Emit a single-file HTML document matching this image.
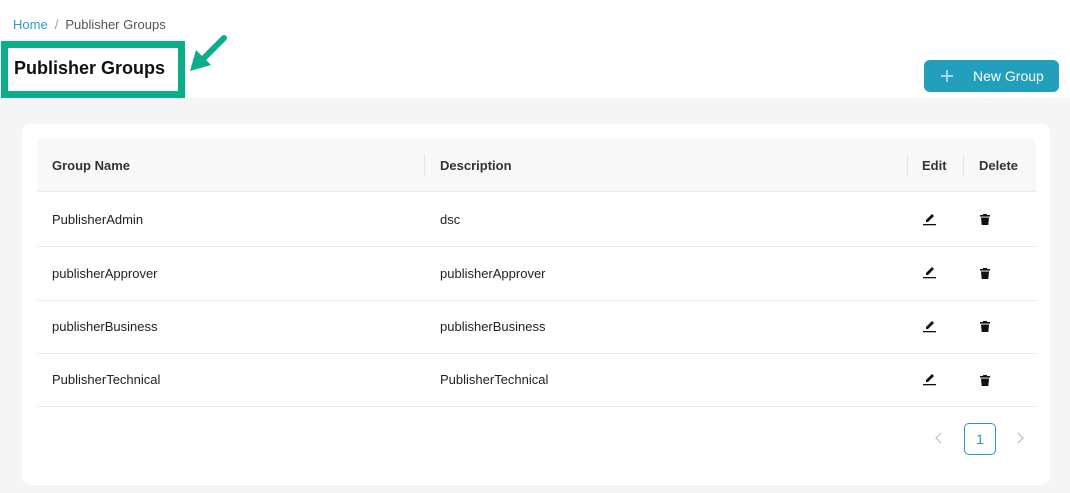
<!DOCTYPE html>
<html><head><style>
*{box-sizing:border-box;margin:0;padding:0}
body{width:1070px;height:493px;background:#f5f5f5;font-family:"Liberation Sans",sans-serif;position:relative;overflow:hidden;color:#222}
.top{position:absolute;left:0;top:0;width:1070px;height:98px;background:#fff}
.bc{position:absolute;left:13px;top:17px;font-size:13px;color:#555}
.bc a{color:#2a9fc0}
.bc span{color:#999;margin:0 7px}
.hl{position:absolute;left:1px;top:41px;width:184px;height:57px;border:7px solid #0aae8b;background:#fff}
.hl div{position:absolute;left:6px;top:10px;font-size:18px;font-weight:bold;color:#111}
.btn{position:absolute;left:924px;top:60px;width:135px;height:32px;background:#229fbd;border-radius:6px;color:#fff;font-size:14px}
.btn .t{position:absolute;left:49px;top:8px}
.card{position:absolute;left:22px;top:124px;width:1028px;height:361px;background:#fff;border-radius:8px}
.th{position:absolute;left:15px;top:14px;width:999px;height:54px;background:#f8f8f8;border-radius:8px 8px 0 0;border-bottom:1px solid #ececec}
.c{position:absolute;font-size:13px;color:#222}
.h{font-weight:bold;top:20px;color:#333}
.dv{position:absolute;top:16px;width:1px;height:22px;background:#e5e5e5}
.row{position:absolute;left:15px;width:999px;height:54px;border-bottom:1px solid #ececec}
.row .c{top:19px}
.pg{position:absolute;left:942px;top:299px;width:32px;height:32px;border:1px solid #229fbd;border-radius:5px;color:#229fbd;font-size:14px;text-align:center;line-height:30px}
</style></head><body>
<div class="top"></div>
<div class="bc"><a>Home</a><span>/</span>Publisher Groups</div>
<div class="hl"><div>Publisher Groups</div></div>
<svg style="position:absolute;left:188px;top:33px" width="42" height="42" viewBox="0 0 42 42"><path d="M36 5 L12 29" stroke="#0aae8b" stroke-width="6" stroke-linecap="round"/><path d="M2 38 L8 17 L23 32 Z" fill="#0aae8b"/></svg>
<div class="btn"><svg style="position:absolute;left:17px;top:10px" width="12" height="12"><path d="M6 0V12M0 6H12" stroke="#cfe9f1" stroke-width="1.4"/></svg><span class="t">New Group</span></div>
<div class="card">
<div class="th">
<span class="c h" style="left:15px">Group Name</span>
<span class="dv" style="left:387px"></span>
<span class="c h" style="left:403px">Description</span>
<span class="dv" style="left:870px"></span>
<span class="c h" style="left:885px">Edit</span>
<span class="dv" style="left:926px"></span>
<span class="c h" style="left:942px">Delete</span>
</div>
<div class="row" style="top:69px"><span class="c" style="left:15px">PublisherAdmin</span><span class="c" style="left:403px">dsc</span></div>
<div class="row" style="top:123px"><span class="c" style="left:15px">publisherApprover</span><span class="c" style="left:403px">publisherApprover</span></div>
<div class="row" style="top:176px"><span class="c" style="left:15px">publisherBusiness</span><span class="c" style="left:403px">publisherBusiness</span></div>
<div class="row" style="top:229px"><span class="c" style="left:15px">PublisherTechnical</span><span class="c" style="left:403px">PublisherTechnical</span></div>
<div class="pg">1</div>
<svg style="position:absolute;left:913px;top:308px" width="8" height="12"><path d="M6 1L1 6L6 11" stroke="#c4c4c4" stroke-width="1.3" fill="none"/></svg>
<svg style="position:absolute;left:994px;top:308px" width="8" height="12"><path d="M2 1L7 6L2 11" stroke="#c4c4c4" stroke-width="1.3" fill="none"/></svg>
</div>
<svg style="position:absolute;left:0;top:0" width="1070" height="493">
<g fill="#111">
<g transform="translate(923,212)"><path d="M3 8 L9 2 L11 4 L5 10 L3 10Z"/><rect x="0" y="12" width="13" height="1.3"/></g>
<g transform="translate(923,265)"><path d="M3 8 L9 2 L11 4 L5 10 L3 10Z"/><rect x="0" y="12" width="13" height="1.3"/></g>
<g transform="translate(923,319)"><path d="M3 8 L9 2 L11 4 L5 10 L3 10Z"/><rect x="0" y="12" width="13" height="1.3"/></g>
<g transform="translate(923,372)"><path d="M3 8 L9 2 L11 4 L5 10 L3 10Z"/><rect x="0" y="12" width="13" height="1.3"/></g>
<g transform="translate(980,214)"><rect x="0" y="1" width="10" height="1.6"/><rect x="3" y="0" width="4" height="1.5"/><path d="M1 3.5 H9 L8.3 11 H1.7Z"/></g>
<g transform="translate(980,268)"><rect x="0" y="1" width="10" height="1.6"/><rect x="3" y="0" width="4" height="1.5"/><path d="M1 3.5 H9 L8.3 11 H1.7Z"/></g>
<g transform="translate(980,321)"><rect x="0" y="1" width="10" height="1.6"/><rect x="3" y="0" width="4" height="1.5"/><path d="M1 3.5 H9 L8.3 11 H1.7Z"/></g>
<g transform="translate(980,375)"><rect x="0" y="1" width="10" height="1.6"/><rect x="3" y="0" width="4" height="1.5"/><path d="M1 3.5 H9 L8.3 11 H1.7Z"/></g>
</g></svg>
</body></html>
